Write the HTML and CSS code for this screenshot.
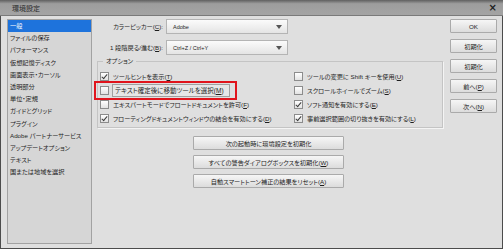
FILE: index.html
```html
<!DOCTYPE html>
<html lang="ja">
  <head>
    <meta charset="UTF-8" />
    <meta name="viewport" content="width=device-width, initial-scale=1.0" />
    <title>環境設定</title>
    <link rel="stylesheet" href="styles.css">
  </head>
  <body>
    <div class="dialog">
      <div class="titlebar">
        <span class="title">環境設定</span>
        <span class="close">×</span>
      </div>

      <div class="content">
        <ul class="nav">
          <li class="active">一般</li>
          <li>ファイルの保存</li>
          <li>パフォーマンス</li>
          <li>仮想記憶ディスク</li>
          <li>画面表示・カーソル</li>
          <li>透明部分</li>
          <li>単位・定規</li>
          <li>ガイドとグリッド</li>
          <li>プラグイン</li>
          <li>Adobe パートナーサービス</li>
          <li>アップデートオプション</li>
          <li>テキスト</li>
          <li>国または地域を選択</li>
        </ul>

        <div class="main">
          <div class="fields">
            <div class="field">
              <label>カラーピッカー(<u>C</u>):</label>
              <div class="select"><span>Adobe</span><span class="arrow"></span></div>
            </div>
            <div class="field">
              <label>1 段階戻る/進む(<u>B</u>):</label>
              <div class="select"><span>Ctrl+Z / Ctrl+Y</span><span class="arrow"></span></div>
            </div>
          </div>

          <fieldset class="options">
            <legend>オプション</legend>
            <div class="opt-grid">
              <div class="opt"><span class="check on"></span><span>ツールヒントを表示(<u>T</u>)</span></div>
              <div class="opt"><span class="check"></span><span>ツールの変更に Shift キーを使用(<u>U</u>)</span></div>
              <div class="opt">
                <span class="highlight">
                  <span class="check"></span>
                  <span class="focus">テキスト確定後に移動ツールを選択(<u>M</u>)</span>
                </span>
              </div>
              <div class="opt"><span class="check"></span><span>スクロールホイールでズーム(<u>S</u>)</span></div>
              <div class="opt"><span class="check"></span><span>エキスパートモードでフロートドキュメントを許可(<u>F</u>)</span></div>
              <div class="opt"><span class="check on"></span><span>ソフト通知を有効にする(<u>E</u>)</span></div>
              <div class="opt"><span class="check on"></span><span>フローティングドキュメントウィンドウの結合を有効にする(<u>D</u>)</span></div>
              <div class="opt"><span class="check on"></span><span>事前選択範囲の切り抜きを有効にする(<u>L</u>)</span></div>
            </div>
          </fieldset>

          <div class="resets">
            <button class="btn">次の起動時に環境設定を初期化</button>
            <button class="btn">すべての警告ダイアログボックスを初期化(<u>W</u>)</button>
            <button class="btn">自動スマートトーン補正の結果をリセット(<u>A</u>)</button>
          </div>
        </div>

        <div class="side">
          <button class="btn">OK</button>
          <button class="btn">初期化</button>
          <button class="btn">初期化</button>
          <button class="btn">前へ(<u>P</u>)</button>
          <button class="btn">次へ(<u>N</u>)</button>
        </div>
      </div>
    </div>
  </body>
</html>
```

FILE: styles.css
```css
body {
  margin: 0;
  padding: 0;
  background-color: #ffffff;
  font-family: "Liberation Sans", "Noto Sans CJK JP", sans-serif;
  font-size: 6.2px;
  font-feature-settings: "palt";
  color: #1e1e1e;
}

.dialog {
  width: 503px;
  height: 249px;
  box-sizing: border-box;
  border: 1px solid #4c4c4c;
  border-top: none;
  background-color: #dfdfdf;
  display: flex;
  flex-direction: column;
}

.titlebar {
  height: 15px;
  margin: 0 -1px;
  display: flex;
  align-items: center;
  justify-content: space-between;
  padding: 0 6px 0 12px;
  background: linear-gradient(#5f5f5f, #9d9d9d 25%, #a4a4a4);
  border-bottom: 1px solid #7a7a7a;
}

.title {
  font-size: 7px;
  color: #2a2a2a;
}

.close {
  font-family: "DejaVu Sans", sans-serif;
  font-size: 10px;
  font-weight: bold;
  color: #1e1e1e;
}

.content {
  flex: 1;
  display: flex;
  padding: 3px 5px 4px 6px;
}

/* left category list */
.nav {
  list-style: none;
  margin: 0;
  padding: 0;
  width: 85px;
  box-sizing: border-box;
  border: 1px solid #a2a2a2;
  background-color: #d6d6d6;
  flex-shrink: 0;
}

.nav li {
  height: 12.2px;
  line-height: 12.2px;
  padding-left: 2px;
  white-space: nowrap;
}

.nav li.active {
  background-color: #1e73dc;
  color: #ffffff;
}

/* middle column */
.main {
  width: 346px;
  margin-left: 5px;
  flex-shrink: 0;
}

.fields {
  display: flex;
  flex-direction: column;
  gap: 6px;
}

.field {
  display: flex;
  align-items: center;
}

.field label {
  width: 66px;
  text-align: right;
  margin-right: 3px;
  white-space: nowrap;
}

.select {
  width: 122px;
  height: 15px;
  box-sizing: border-box;
  border: 1px solid #b4b4b4;
  background: linear-gradient(#fbfbfb, #e4e4e4);
  display: flex;
  align-items: center;
  justify-content: space-between;
  padding: 0 5px 0 6px;
  font-size: 5.5px;
}

.arrow {
  width: 0;
  height: 0;
  border-left: 3px solid transparent;
  border-right: 3px solid transparent;
  border-top: 4px solid #555555;
}

.options {
  margin: 2px 0 0 0;
  padding: 4px 0 2px 2px;
  border: 1px solid #c4c4c4;
  box-shadow: 1px 1px 0 #f4f4f4;
}

.options legend {
  margin-left: 3px;
  padding: 0 3px;
  line-height: 8px;
}

.opt-grid {
  display: grid;
  grid-template-columns: 194px 1fr;
  grid-auto-rows: 14px;
}

.opt {
  display: flex;
  align-items: center;
  gap: 4px;
  white-space: nowrap;
}

.check {
  width: 9px;
  height: 9px;
  box-sizing: border-box;
  border: 1px solid #8c8c8c;
  background: linear-gradient(#ffffff, #e2e2e2);
  position: relative;
  flex-shrink: 0;
}

.check.on::after {
  content: "";
  position: absolute;
  left: 2px;
  top: 0;
  width: 2px;
  height: 5px;
  border-right: 1.5px solid #3c3c3c;
  border-bottom: 1.5px solid #3c3c3c;
  transform: rotate(40deg);
}

.highlight {
  display: flex;
  align-items: center;
  gap: 3px;
  margin-left: -4px;
  padding: 0 5px 0 4px;
  height: 15px;
  outline: 2px solid #e0141c;
}

.focus {
  border: 1px solid #a0a0a0;
  background-color: #e6e6e6;
  padding: 1px 5px 1px 2px;
  font-size: 6.5px;
  line-height: 9px;
}

.resets {
  display: flex;
  flex-direction: column;
  gap: 5px;
  margin: 8px 0 0 96px;
  width: 151px;
}

.btn {
  height: 14px;
  padding: 0;
  box-sizing: border-box;
  border: 1px solid #aaaaaa;
  border-radius: 1px;
  background: linear-gradient(#f6f6f6, #dcdcdc);
  font-family: "Liberation Sans", "Noto Sans CJK JP", sans-serif;
  font-size: 6.2px;
  font-feature-settings: "palt";
  color: #1e1e1e;
  cursor: pointer;
}

/* right buttons */
.side {
  width: 47px;
  margin-left: 7px;
  display: flex;
  flex-direction: column;
  gap: 6px;
}
```
